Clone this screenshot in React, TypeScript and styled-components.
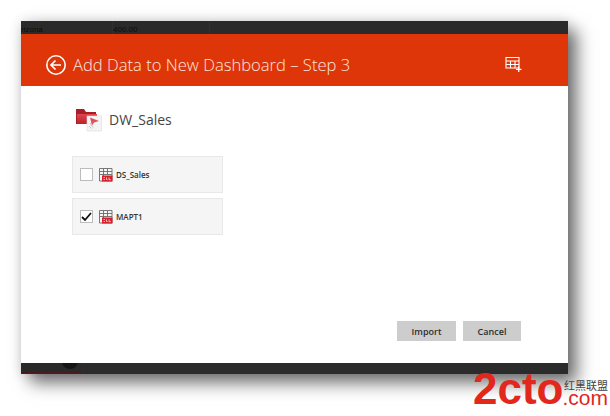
import styled, { createGlobalStyle } from "styled-components";

const GlobalStyle = createGlobalStyle`
  html, body {
    margin: 0;
    padding: 0;
    background: #fff;
    overflow: hidden;
  }
  body {
    font-family: "Open Sans", "Noto Sans", "Liberation Sans", sans-serif;
  }
`;

const Page = styled.div`
  position: relative;
  width: 610px;
  height: 416px;
  padding: 21px 0 0 21px;
  box-sizing: border-box;
  overflow: hidden;
`;

const Window = styled.div`
  width: 547px;
  height: 353px;
  display: flex;
  flex-direction: column;
  background: #fff;
  box-shadow:
    9px 9px 16px rgba(0, 0, 0, 0.55),
    0 0 12px rgba(0, 0, 0, 0.14);
`;

const TopStrip = styled.div`
  height: 13px;
  flex: none;
  display: flex;
  background: #2a2a2a;
  font-family: "Liberation Sans", sans-serif;
  font-size: 8px;
  line-height: 17px;
  color: #0d0d0d;
  overflow: hidden;
`;

const StripCell = styled.div<{ $width: number }>`
  width: ${(p) => p.$width}px;
  flex: none;
  box-sizing: border-box;
  border-right: 1px solid #303030;
`;

const Header = styled.header`
  height: 52px;
  flex: none;
  box-sizing: border-box;
  display: flex;
  align-items: center;
  padding: 10px 46px 0 24px;
  background: #de3509;
  color: #fff;
`;

const BackIcon = styled.svg`
  width: 22px;
  height: 22px;
  flex: none;
  margin-right: 6px;
`;

const Title = styled.h1`
  flex: 1;
  margin: 0;
  font-size: 16.6px;
  font-weight: 300;
  line-height: 24px;
  white-space: nowrap;
  color: #fde6dc;
`;

const TableAddIcon = styled.svg`
  width: 17px;
  height: 16px;
  flex: none;
  margin-bottom: 2px;
`;

const Body = styled.main`
  flex: 1;
  display: flex;
  flex-direction: column;
  padding: 21px 47px 22px 51px;
  min-height: 0;
`;

const Source = styled.div`
  display: flex;
  align-items: center;
  gap: 6px;
  height: 26px;
  margin-left: 4px;
`;

const SourceName = styled.span`
  font-size: 14px;
  line-height: 20px;
  color: #444;
`;

const TableList = styled.div`
  display: flex;
  flex-direction: column;
  gap: 5px;
  width: 151px;
  margin-top: 23px;
`;

const TableRow = styled.label`
  height: 37px;
  box-sizing: border-box;
  display: flex;
  align-items: center;
  padding-left: 7px;
  background: #f5f5f5;
  border: 1px solid #e8e8e8;
`;

const CheckBox = styled.span`
  width: 13px;
  height: 13px;
  flex: none;
  display: flex;
  align-items: center;
  justify-content: center;
  box-sizing: border-box;
  margin-right: 6px;
  background: #fff;
  border: 1px solid #bcbcbc;
`;

const SqlTableIcon = styled.svg`
  width: 14px;
  height: 14px;
  flex: none;
  margin-right: 3px;
`;

const TableName = styled.span`
  font-size: 8px;
  font-weight: 600;
  color: #333;
  white-space: nowrap;
`;

const Footer = styled.footer`
  margin-top: auto;
  display: flex;
  justify-content: flex-end;
  gap: 7px;
`;

const ActionButton = styled.button<{ $width: number }>`
  width: ${(p) => p.$width}px;
  height: 20px;
  padding: 0;
  border: 0;
  background: #cdcdcd;
  font-family: inherit;
  font-size: 9px;
  font-weight: 600;
  color: #2e2e2e;
`;

const BottomStrip = styled.div`
  position: relative;
  height: 11px;
  flex: none;
  display: flex;
  background: #2b2b2b;
  overflow: hidden;
`;

const TabCell = styled.div`
  position: relative;
  width: 60px;
  box-sizing: border-box;
  background: #292929;
  border-bottom: 1px solid #4a1a1c;
  margin-bottom: 1px;
`;

const TabBadge = styled.span`
  position: absolute;
  left: 41px;
  top: -9px;
  width: 16px;
  height: 15px;
  border-radius: 50%;
  background: #151515;
`;

const Watermark = styled.div`
  position: absolute;
  left: 473px;
  top: 373px;
  display: flex;
  height: 32px;
  color: #e2271d;
`;

const WatermarkBrand = styled.span`
  width: 90px;
  font-family: "Liberation Sans", sans-serif;
  font-size: 44px;
  font-weight: 700;
  line-height: 32px;
`;

const WatermarkSide = styled.div`
  width: 45px;
  display: flex;
  flex-direction: column;
  align-items: flex-end;
  padding-top: 7px;
  box-sizing: border-box;
`;

const WatermarkCn = styled.span`
  font-family: "Noto Sans CJK SC", sans-serif;
  font-size: 11px;
  line-height: 11px;
  white-space: nowrap;
  color: #444;
`;

const WatermarkTld = styled.span`
  font-family: "Liberation Sans", sans-serif;
  font-size: 21px;
  line-height: 14px;
`;

const FolderIcon = () => (
  <svg width="27" height="24" viewBox="0 0 27 24">
    <defs>
      <linearGradient id="folderFill" x1="0" y1="0" x2="0" y2="1">
        <stop offset="0" stopColor="#e0474f" />
        <stop offset="1" stopColor="#b8222b" />
      </linearGradient>
    </defs>
    <path d="M0 1h8l2 3h10v12H0z" fill="#a81e26" />
    <path d="M1 6h20v10H1z" fill="url(#folderFill)" />
    <path d="M11 8h14.500v15H11z" fill="#f4f4f4" stroke="#dcdcdc" strokeWidth="0.6" />
    <path d="M14 9.500l9 3.500-5 1.500-2 3z" fill="#e0505a" />
    <path d="M14 15l3 4.500M13 18l2.500 2.500" stroke="#c4c4c4" strokeWidth="1" fill="none" />
  </svg>
);

const SqlIcon = () => (
  <SqlTableIcon viewBox="0 0 14 14">
    <path
      d="M0.500 0.500h12.500v12.500H0.500zM0.500 3.500h12.500M0.500 6.500h12.500M4.500 0.500v12.500M8.500 0.500v6"
      fill="none"
      stroke="#6b6b6b"
      strokeWidth="0.9"
    />
    <rect x="3" y="7.500" width="10.500" height="6" fill="#d8202a" />
    <path d="M4.500 9.500h1.500M4.500 11.500h1.500M7.500 9.500v2h1M10 9.500v2.200h1.800" stroke="#fff" strokeWidth="0.7" fill="none" />
  </SqlTableIcon>
);

const tables = [
  { name: "DS_Sales", checked: false },
  { name: "MAPT1", checked: true },
];

export default function App() {
  return (
    <Page>
      <GlobalStyle />
      <Window>
        <TopStrip>
          <StripCell $width={92}>rizona</StripCell>
          <StripCell $width={97}>400.00</StripCell>
        </TopStrip>
        <Header>
          <BackIcon viewBox="0 0 22 22">
            <circle cx="11" cy="11" r="9.200" fill="none" stroke="#fff" strokeWidth="1.600" />
            <path d="M16 11H6.500M10.500 6.500L6 11l4.500 4.500" fill="none" stroke="#fff" strokeWidth="1.700" />
          </BackIcon>
          <Title>Add Data to New Dashboard – Step 3</Title>
          <TableAddIcon viewBox="0 0 17 16">
            <path
              d="M1 1.500h13v10.500H1zM1 5h13M1 8.500h13M5.500 5v7M10 5v7"
              fill="none"
              stroke="#fff"
              strokeWidth="1.100"
            />
            <path d="M11 13.300h5.500M13.700 10.500v5.500" stroke="#fff" strokeWidth="1.300" />
          </TableAddIcon>
        </Header>
        <Body>
          <Source>
            <FolderIcon />
            <SourceName>DW_Sales</SourceName>
          </Source>
          <TableList>
            {tables.map((t) => (
              <TableRow key={t.name}>
                <CheckBox>
                  {t.checked && (
                    <svg width="11" height="10" viewBox="0 0 11 10">
                      <path d="M1 5l3 3 6-7" fill="none" stroke="#111" strokeWidth="1.800" />
                    </svg>
                  )}
                </CheckBox>
                <SqlIcon />
                <TableName>{t.name}</TableName>
              </TableRow>
            ))}
          </TableList>
          <Footer>
            <ActionButton $width={59}>Import</ActionButton>
            <ActionButton $width={58}>Cancel</ActionButton>
          </Footer>
        </Body>
        <BottomStrip>
          <TabCell>
            <TabBadge />
          </TabCell>
        </BottomStrip>
      </Window>
      <Watermark>
        <WatermarkBrand>2cto</WatermarkBrand>
        <WatermarkSide>
          <WatermarkCn>红黑联盟</WatermarkCn>
          <WatermarkTld>.com</WatermarkTld>
        </WatermarkSide>
      </Watermark>
    </Page>
  );
}
